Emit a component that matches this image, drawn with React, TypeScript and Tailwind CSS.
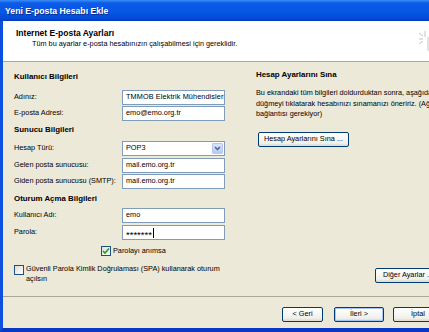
import type { ReactNode } from "react";

function Label({ children }: { children: ReactNode }) {
  return <div className="w-[108px] shrink-0 whitespace-nowrap">{children}</div>;
}

function TextBox({ children }: { children: ReactNode }) {
  return (
    <div className="w-[103px] h-[15px] shrink-0 flex items-center pl-[3px] bg-white border border-[#7F9DB9] overflow-hidden whitespace-nowrap">
      {children}
    </div>
  );
}

function Row({ label, className, children }: { label: string; className: string; children: ReactNode }) {
  return (
    <div className={`flex items-center h-[15px] ${className}`}>
      <Label>{label}</Label>
      {children}
    </div>
  );
}

function CheckBox({ checked }: { checked?: boolean }) {
  return (
    <div className="w-[10px] h-[10px] shrink-0 border border-[#1C5180] bg-[linear-gradient(135deg,#DCDCD7,#FFFFFF)] flex items-center justify-center">
      {checked && (
        <svg width="8" height="8" viewBox="0 0 8 8">
          <polyline points="1,4 3,6 7,1.5" fill="none" stroke="#21A121" strokeWidth="1.6" />
        </svg>
      )}
    </div>
  );
}

function XpButton({ children, className, isDefault }: { children: ReactNode; className: string; isDefault?: boolean }) {
  return (
    <div
      className={`h-[15px] shrink-0 flex items-center justify-center rounded-[2px] border border-[#003C74] bg-[linear-gradient(to_bottom,#FFFFFF,#F0F0EA_80%,#D6D0C5)] whitespace-nowrap ${
        isDefault ? "shadow-[inset_0_0_0_1px_#A6C5F4]" : "shadow-[inset_0_-1px_0_#E3DFD2]"
      } ${className}`}
    >
      {children}
    </div>
  );
}

export default function App() {
  return (
    <div className="w-[429px] h-[332px] overflow-hidden flex flex-col bg-[#ECE9D8] font-['Liberation_Sans',Arial,sans-serif] text-[7.3px] leading-[10.5px] text-black">
      {/* title bar */}
      <div className="h-[21px] shrink-0 flex items-center pl-[5px] pt-[2px] bg-[linear-gradient(to_bottom,#3D8EF7_0%,#0C5CE9_14%,#0556E3_60%,#0349D6_90%,#0238B8_100%)]">
        <span className="text-white font-bold text-[8.7px] whitespace-nowrap [text-shadow:1px_1px_0_#0B2C8C]">
          Yeni E-posta Hesabı Ekle
        </span>
      </div>

      <div className="flex-1 min-h-0 flex flex-col border-l-[3px] border-l-[#0D50E0] border-b-[4px] border-b-[#0838C4]">
        {/* header */}
        <div className="h-[41px] shrink-0 flex bg-white border-b border-[#ACA899]">
          <div className="flex-1 pl-[13px] pt-[7px]">
            <div className="font-bold text-[8.5px] leading-[11px] whitespace-nowrap">Internet E-posta Ayarları</div>
            <div className="pl-[16px] whitespace-nowrap">
              Tüm bu ayarlar e-posta hesabınızın çalışabilmesi için gereklidir.
            </div>
          </div>
          <svg width="10" height="30" viewBox="0 0 10 30" className="mt-[4px] shrink-0">
            <g stroke="#C4C4C4" strokeWidth="1" fill="none">
              <line x1="6" y1="6" x2="6" y2="12" />
              <line x1="0" y1="8" x2="4" y2="11" />
              <line x1="0" y1="14" x2="4" y2="14" />
              <line x1="0" y1="19" x2="4" y2="16" />
              <line x1="9" y1="12" x2="9" y2="26" />
            </g>
          </svg>
        </div>

        {/* body */}
        <div className="flex-1 min-h-0 flex">
          <div className="w-[242px] shrink-0 pl-[11px] flex flex-col">
            <div className="mt-[9px] h-[12px] leading-[12px] font-bold text-[7.9px] whitespace-nowrap">Kullanıcı Bilgileri</div>
            <Row label="Adınız:" className="mt-[7px]">
              <TextBox>
                <span className="tracking-[0.1px]">TMMOB Elektrik Mühendisleri Odası</span>
              </TextBox>
            </Row>
            <Row label="E-posta Adresi:" className="mt-[1px]">
              <TextBox>emo@emo.org.tr</TextBox>
            </Row>
            <div className="mt-[3px] h-[12px] leading-[12px] font-bold text-[7.9px] whitespace-nowrap">Sunucu Bilgileri</div>
            <Row label="Hesap Türü:" className="mt-[5px]">
              <div className="w-[103px] h-[15px] shrink-0 flex items-center justify-between pl-[3px] pr-[1px] bg-white border border-[#7F9DB9]">
                <span>POP3</span>
                <div className="w-[11px] h-[11px] rounded-[1px] bg-[linear-gradient(to_bottom,#D9E5FD,#B7CBF5)] border border-[#B5C8F2] flex items-center justify-center">
                  <svg width="7" height="5" viewBox="0 0 7 5">
                    <polyline points="1,1 3.5,3.5 6,1" fill="none" stroke="#4D6185" strokeWidth="1.5" />
                  </svg>
                </div>
              </div>
            </Row>
            <Row label="Gelen posta sunucusu:" className="mt-[2px]">
              <TextBox>mail.emo.org.tr</TextBox>
            </Row>
            <Row label="Giden posta sunucusu (SMTP):" className="mt-[1px]">
              <TextBox>mail.emo.org.tr</TextBox>
            </Row>
            <div className="mt-[4px] h-[12px] leading-[12px] font-bold text-[7.9px] whitespace-nowrap">Oturum Açma Bilgileri</div>
            <Row label="Kullanıcı Adı:" className="mt-[3px]">
              <TextBox>emo</TextBox>
            </Row>
            <Row label="Parola:" className="mt-[2px]">
              <TextBox>
                <span className="text-[9.5px] leading-none pt-[4px]">*******</span>
                <span className="w-[1px] h-[10px] bg-black ml-[1px]" />
              </TextBox>
            </Row>
            <div className="mt-[5px] h-[12px] flex items-center gap-[2px] pl-[87px]">
              <CheckBox checked />
              <span className="whitespace-nowrap">Parolayı anımsa</span>
            </div>
            <div className="mt-[7px] flex items-start gap-[2px]">
              <div className="mt-[1px]">
                <CheckBox />
              </div>
              <div className="leading-[9.5px]">
                Güvenli Parola Kimlik Doğrulaması (SPA) kullanarak oturum
                <br />
                açılsın
              </div>
            </div>
          </div>

          <div className="flex-1 min-w-0 pl-[11px] flex flex-col">
            <div className="mt-[7px] h-[12px] leading-[12px] font-bold text-[7.9px] whitespace-nowrap">Hesap Ayarlarını Sına</div>
            <div className="mt-[7px] whitespace-nowrap">
              Bu ekrandaki tüm bilgileri doldurduktan sonra, aşağıdaki
              <br />
              düğmeyi tıklatarak hesabınızı sınamanızı öneririz. (Ağ
              <br />
              bağlantısı gerekiyor)
            </div>
            <XpButton className="mt-[12px] ml-[2px] w-[91px] self-start">Hesap Ayarlarını Sına ...</XpButton>
            <XpButton className="mt-auto mb-[13px] ml-[119px] w-[66px] self-start">Diğer Ayarlar ...</XpButton>
          </div>
        </div>

        {/* footer */}
        <div className="h-[32px] shrink-0 border-t border-[#ACA899] flex items-start pt-[10px] pl-[279px]">
          <XpButton className="w-[41px]">&lt; Geri</XpButton>
          <XpButton className="w-[50px] ml-[11px]" isDefault>
            İleri &gt;
          </XpButton>
          <XpButton className="w-[50px] ml-[9px]">İptal</XpButton>
        </div>
      </div>
    </div>
  );
}
